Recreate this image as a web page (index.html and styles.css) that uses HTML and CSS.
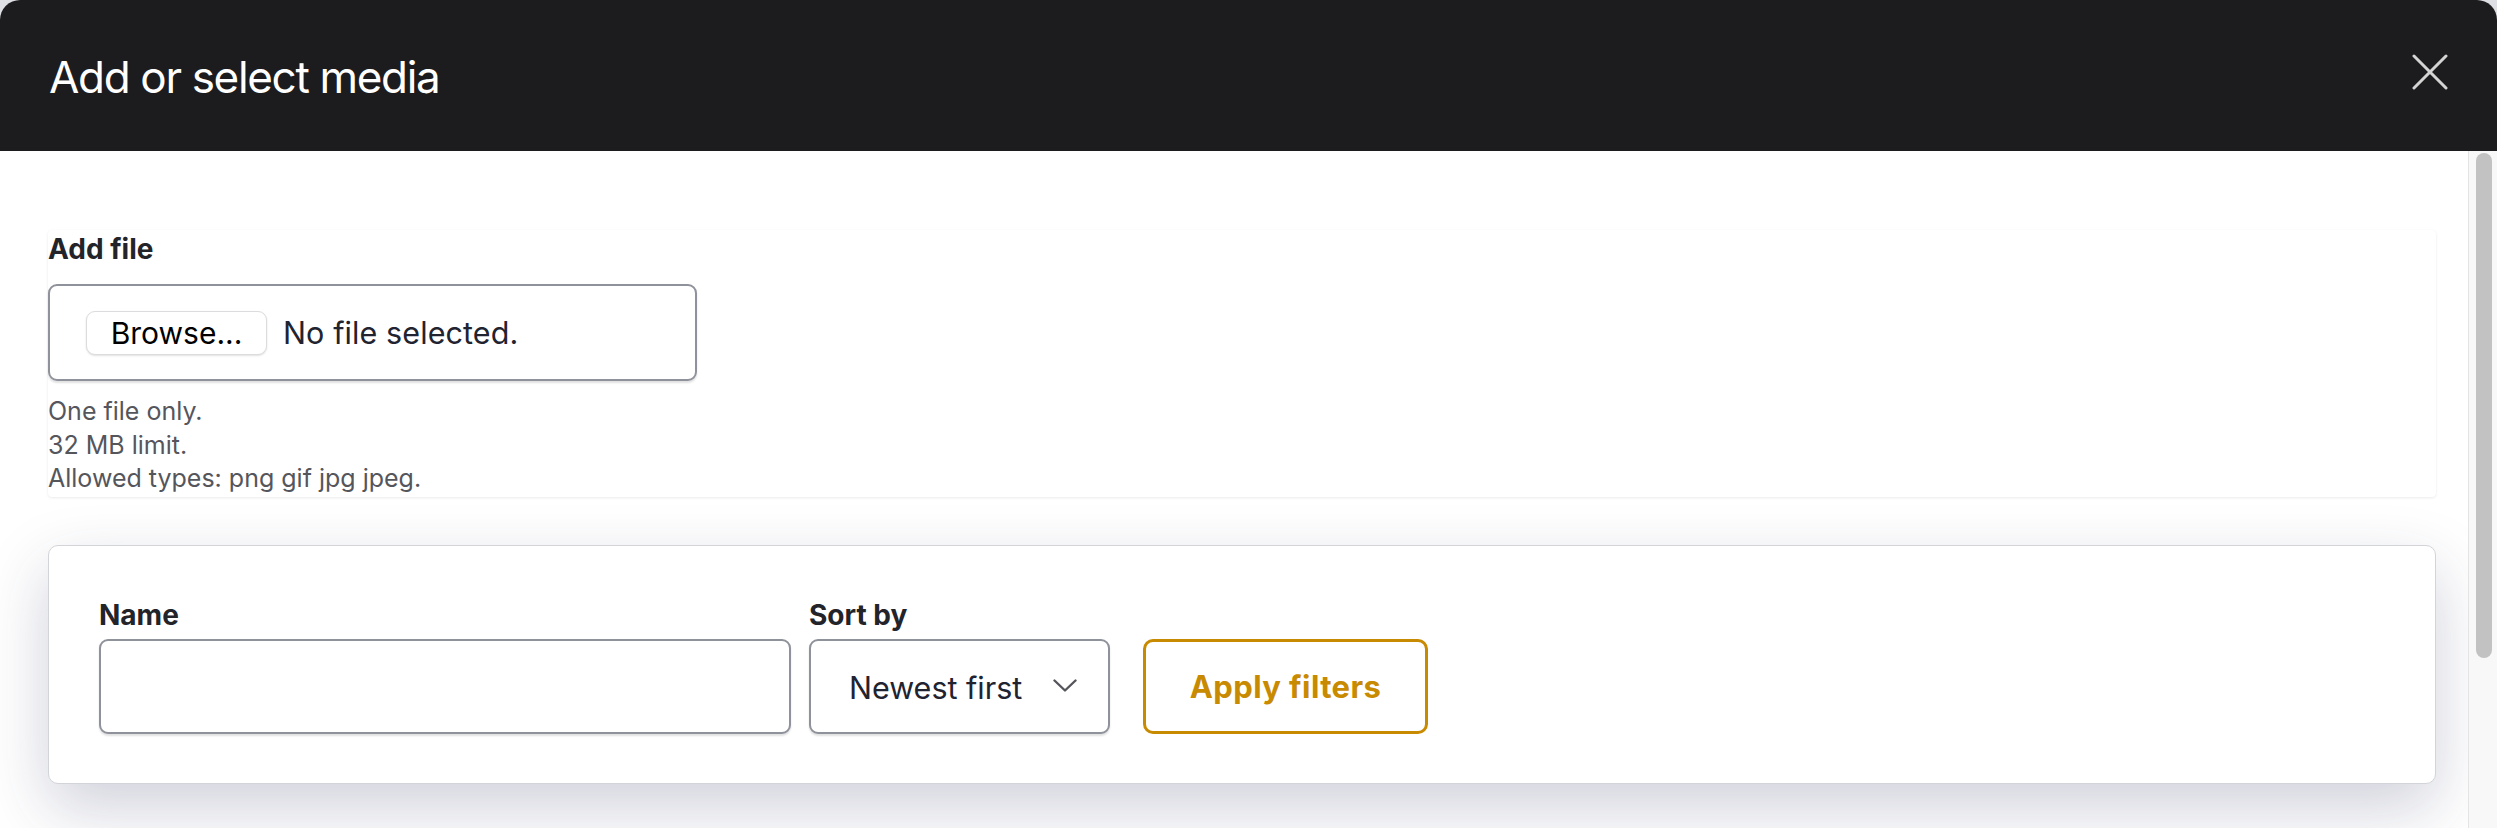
FILE: index.html
```html
<!DOCTYPE html>
<html lang="en">
<head>
<meta charset="utf-8">
<title>Add or select media</title>
<link rel="stylesheet" href="styles.css">
</head>
<body>
<div class="dialog">
  <header class="dialog-header">
    <h1 class="dialog-title">Add or select media</h1>
    <button class="close" aria-label="Close">
      <svg width="36" height="36" viewBox="0 0 36 36"><path d="M2 2L34 34M34 2L2 34" fill="none" stroke="#d4d4d4" stroke-width="3" stroke-linecap="round"/></svg>
    </button>
  </header>
  <div class="dialog-body">
    <main class="content">
      <section class="upload-card">
        <div class="field-label upload-label">Add file</div>
        <div class="file-box">
          <button class="browse">Browse...</button>
          <span class="file-status">No file selected.</span>
        </div>
        <div class="help">
          <div>One file only.</div>
          <div>32 MB limit.</div>
          <div>Allowed types: png gif jpg jpeg.</div>
        </div>
      </section>
      <section class="filter-card">
        <div class="filter-row">
          <div class="field field-name">
            <label class="field-label" for="name">Name</label>
            <input class="text-input" id="name" type="text">
          </div>
          <div class="field field-sort">
            <label class="field-label">Sort by</label>
            <div class="select">
              <span>Newest first</span>
              <svg width="24" height="13" viewBox="0 0 24 13"><path d="M1.5 1.5L12 11.5L22.5 1.5" fill="none" stroke="#55565b" stroke-width="2.4" stroke-linecap="round" stroke-linejoin="round"/></svg>
            </div>
          </div>
          <button class="apply">Apply filters</button>
        </div>
      </section>
    </main>
    <div class="scrollbar"><div class="thumb"></div></div>
  </div>
</div>
</body>
</html>
```

FILE: styles.css
```css
* { box-sizing: border-box; }

html, body {
  margin: 0;
  padding: 0;
}

body {
  width: 2497px;
  height: 828px;
  overflow: hidden;
  background: #dedfe4;
  font-family: "Inter", "Noto Sans", sans-serif;
  color: #232429;
}

.dialog {
  width: 2497px;
  height: 828px;
  display: flex;
  flex-direction: column;
  background: #ffffff;
  border-radius: 20px 20px 0 0;
  overflow: hidden;
}

.dialog-header {
  height: 151px;
  flex: 0 0 151px;
  background: #1c1c1e;
  display: flex;
  align-items: center;
  justify-content: space-between;
  padding: 0 49px;
}

.dialog-title {
  margin: 2px 0 0 0;
  font-family: "Inter", sans-serif;
  font-weight: 400;
  font-size: 44px;
  line-height: 44px;
  letter-spacing: -0.03em;
  color: #ffffff;
}

.close {
  border: 0;
  background: transparent;
  padding: 0;
  width: 36px;
  height: 36px;
  margin-bottom: 7px;
  display: block;
}

.close svg { display: block; }

.dialog-body {
  flex: 1;
  display: flex;
  min-height: 0;
}

.content {
  flex: 1;
  overflow: hidden;
  padding: 79px 32px 0 48px;
}

.scrollbar {
  width: 29px;
  flex: 0 0 29px;
  background: #f8f8f8;
  border-left: 1px solid #e4e4e4;
  padding: 2px 5px 0 7px;
}

.thumb {
  width: 16px;
  height: 505px;
  border-radius: 8px;
  background: #c2c2c2;
}

.field-label {
  display: block;
  font-weight: 700;
  font-size: 28px;
  line-height: 34px;
  color: #232429;
}

.upload-card {
  background: #ffffff;
  border-radius: 4px;
  box-shadow: 0 1px 3px rgba(0, 0, 0, 0.08), 0 0 1px rgba(0, 0, 0, 0.04);
  padding: 2px 0 1px 0;
}

.upload-label {
  margin-bottom: 18px;
}

.file-box {
  width: 649px;
  height: 97px;
  border: 2px solid #8f929b;
  border-radius: 9px;
  box-shadow: 0 2px 2px rgba(0, 0, 0, 0.12);
  display: flex;
  align-items: center;
  padding-left: 36px;
}

.browse {
  width: 181px;
  height: 44px;
  border: 1px solid #dcdcde;
  border-radius: 9px;
  background: #ffffff;
  box-shadow: 0 1px 2px rgba(0, 0, 0, 0.12);
  font-family: "Inter", sans-serif;
  font-size: 30px;
  color: #000000;
  padding: 0;
  margin-right: 16px;
}

.file-status {
  font-size: 30.5px;
  color: #222330;
  letter-spacing: 0.1px;
}

.help {
  margin-top: 14px;
  font-size: 25px;
  line-height: 33.5px;
  color: #55565c;
}

.filter-card {
  margin-top: 48px;
  background: #ffffff;
  border: 1px solid #d3d4d9;
  border-radius: 10px;
  padding: 52px 50px 49px 50px;
  box-shadow: 0 24px 64px rgba(40, 44, 90, 0.22);
}

.filter-row {
  display: flex;
  align-items: flex-end;
  gap: 18px;
}

.field .field-label {
  margin-bottom: 7px;
}

.field-name { width: 692px; }
.field-sort { width: 301px; }

.text-input {
  display: block;
  width: 100%;
  height: 95px;
  border: 2px solid #8f929b;
  border-radius: 9px;
  box-shadow: 0 2px 2px rgba(0, 0, 0, 0.12);
  background: #ffffff;
  font-family: "Inter", sans-serif;
  font-size: 30px;
  outline: none;
}

.select {
  height: 95px;
  border: 2px solid #8f929b;
  border-radius: 9px;
  box-shadow: 0 2px 2px rgba(0, 0, 0, 0.12);
  background: #ffffff;
  display: flex;
  align-items: center;
  justify-content: space-between;
  padding: 2px 31px 0 38px;
  font-size: 30.5px;
  color: #222330;
}

.select svg { display: block; margin-top: -3px; }

.apply {
  margin-left: 15px;
  width: 285px;
  height: 95px;
  border: 3px solid #c88a00;
  border-radius: 10px;
  background: #ffffff;
  font-family: "Inter", sans-serif;
  font-weight: 700;
  font-size: 31px;
  letter-spacing: 0.4px;
  color: #c88a00;
  padding: 0;
}
```
